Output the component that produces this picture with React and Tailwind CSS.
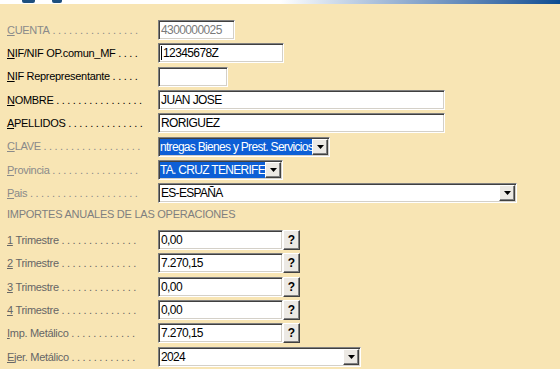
import React from "react";

const dots = (n) => " ." .repeat(n);

const Label = ({ k, rest, n, tone = "text-black" }) => (
  <div className={`w-[145px] pl-[7px] h-[20px] flex items-center overflow-hidden text-[11px] tracking-[-0.3px] ${tone}`}>
    <span className="whitespace-pre shrink-0">
      <u>{k}</u>
      {rest}
    </span>
    <span className="flex-1 min-w-0 overflow-hidden whitespace-pre">{dots(n)}</span>
  </div>
);

const sunken =
  "h-[20px] border border-t-[#808080] border-l-[#808080] border-b-white border-r-white shadow-[inset_1px_1px_0_#404040,inset_-1px_-1px_0_#d4d0c8]";

const raised =
  "bg-[#ece9e4] border border-t-white border-l-white border-b-[#404040] border-r-[#404040] shadow-[inset_-1px_-1px_0_#808080]";

const Input = ({ w, children, muted, caret }) => (
  <div className={`${sunken} ${w} bg-white flex items-center pl-[2px] overflow-hidden whitespace-nowrap text-[12px] tracking-[-0.6px] ${muted ? "text-[#7a7a7a]" : "text-black"}`}>
    {caret && <span className="w-[1px] h-[14px] bg-black mr-[1px] shrink-0" />}
    <span>{children}</span>
  </div>
);

const Arrow = () => (
  <div className={`${raised} w-[16px] h-[16px] flex items-center justify-center shrink-0`}>
    <svg width="7" height="4" viewBox="0 0 7 4">
      <polygon points="0,0 7,0 3.5,4" fill="#000" />
    </svg>
  </div>
);

const Select = ({ w, children, selected }) => (
  <div className={`${sunken} ${w} bg-white flex items-center pl-[1px] pr-[1px]`}>
    <div className={`flex-1 h-[16px] flex items-center overflow-hidden whitespace-nowrap text-[12px] tracking-[-0.7px] ${selected ? "bg-[#0d5fd6] text-white" : "text-black pl-[1px]"}`}>
      <span>{children}</span>
    </div>
    <Arrow />
  </div>
);

const Help = () => (
  <div className={`${raised} w-[17px] h-[20px] flex items-center justify-center text-[12px] font-bold text-black`}>
    ?
  </div>
);

const Row = ({ children }) => (
  <div className="h-[23.35px] flex items-start shrink-0">{children}</div>
);

const gap = <div className="w-[13px] shrink-0" />;

export default function App() {
  const trimestres = [
    { k: "1", rest: " Trimestre", v: "0,00", n: 14 },
    { k: "2", rest: " Trimestre", v: "7.270,15", n: 14 },
    { k: "3", rest: " Trimestre", v: "0,00", n: 14 },
    { k: "4", rest: " Trimestre", v: "0,00", n: 14 },
    { k: "I", rest: "mp. Metálico", v: "7.270,15", n: 12 },
  ];

  return (
    <div className="w-[560px] h-[369px] overflow-hidden bg-[#f8e5b4] flex flex-col" style={{ fontFamily: '"Liberation Sans", Arial, sans-serif' }}>
      {/* title strip */}
      <div className="h-[4px] shrink-0 flex bg-gradient-to-r from-white via-white via-50% to-[#0a4d92]">
        <div className="ml-[22px] w-[13px] h-[3px] bg-[#1e4f7e] rounded-b-[2px]" />
        <div className="ml-[17px] w-[10px] h-[3px] bg-[#1e4f7e] rounded-b-[2px]" />
      </div>

      <div className="pt-[16px] flex flex-col">
        <Row>
          <Label k="C" rest="UENTA" n={16} tone="text-[#8a8a8a]" />
          {gap}
          <Input w="w-[77px]" muted>4300000025</Input>
        </Row>
        <Row>
          <Label k="N" rest="IF/NIF OP.comun_MF" n={4} />
          {gap}
          <Input w="w-[126px]" caret>12345678Z</Input>
        </Row>
        <Row>
          <Label k="N" rest="IF Reprepresentante" n={5} />
          {gap}
          <Input w="w-[70px]" />
        </Row>
        <Row>
          <Label k="N" rest="OMBRE" n={16} />
          {gap}
          <Input w="w-[287px]">JUAN JOSE</Input>
        </Row>
        <Row>
          <Label k="A" rest="PELLIDOS" n={14} />
          {gap}
          <Input w="w-[287px]">RORIGUEZ</Input>
        </Row>
        <Row>
          <Label k="C" rest="LAVE" n={18} tone="text-[#8a8a8a]" />
          {gap}
          <Select w="w-[172px]" selected>ntregas Bienes y Prest. Servicios</Select>
        </Row>
        <Row>
          <Label k="P" rest="rovincia" n={16} tone="text-[#8a8a8a]" />
          {gap}
          <Select w="w-[125px]" selected>TA. CRUZ TENERIFE</Select>
        </Row>
        <Row>
          <Label k="P" rest="ais" n={20} tone="text-[#8a8a8a]" />
          {gap}
          <Select w="w-[359px]">ES-ESPAÑA</Select>
        </Row>
        <Row>
          <div className="pl-[7px] h-[14px] flex items-center text-[11px] tracking-[-0.25px] text-[#7f7f7f] whitespace-nowrap">
            IMPORTES ANUALES DE LAS OPERACIONES
          </div>
        </Row>
        {trimestres.map((t) => (
          <Row key={t.k + t.rest}>
            <Label k={t.k} rest={t.rest} n={t.n} tone="text-[#666666]" />
            {gap}
            <Input w="w-[125px]">{t.v}</Input>
            <Help />
          </Row>
        ))}
        <Row>
          <Label k="E" rest="jer. Metálico" n={12} tone="text-[#666666]" />
          {gap}
          <Select w="w-[203px]">2024</Select>
        </Row>
      </div>
    </div>
  );
}
